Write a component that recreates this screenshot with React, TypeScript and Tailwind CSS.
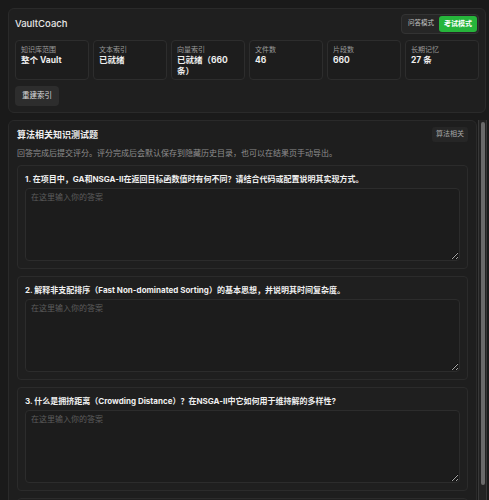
import React from 'react';

const stats = [
  { label: '知识库范围', value: '整个 Vault' },
  { label: '文本索引', value: '已就绪' },
  { label: '向量索引', value: '已就绪（660 条）' },
  { label: '文件数', value: '46' },
  { label: '片段数', value: '660' },
  { label: '长期记忆', value: '27 条' },
];

const questions = [
  '1. 在项目中，GA和NSGA-II在返回目标函数值时有何不同？请结合代码或配置说明其实现方式。',
  '2. 解释非支配排序（Fast Non-dominated Sorting）的基本思想，并说明其时间复杂度。',
  '3. 什么是拥挤距离（Crowding Distance）？在NSGA-II中它如何用于维持解的多样性?',
  '4. 在项目配置中，种群规模和迭代次数是如何设置的？它们对收敛速度有什么影响？',
];

// 单个统计卡片
const StatCard: React.FC<{ label: string; value: string }> = ({ label, value }) => (
  <div className="rounded-[4px] border border-[#2d2d2d] bg-[#1d1d1d] pl-[5px] pr-[8px] pt-[4px] h-[40px]">
    <div className="text-[7px] leading-[9px] text-[#9a9a9a]">{label}</div>
    <div className="mt-[1px] text-[8.5px] leading-[10.5px] font-bold text-[#ededed]">{value}</div>
  </div>
);

// 题目卡片
const QuestionCard: React.FC<{ text: string }> = ({ text }) => (
  <div className="rounded-[4px] border border-[#2b2b2b] bg-[#1f1f1f] p-[7px]">
    <div className="text-[8px] leading-[12px] font-bold text-[#f0f0f0] mb-[3px]">{text}</div>
    <textarea
      placeholder="在这里输入你的答案"
      className="block w-full h-[73px] rounded-[4px] border border-[#2c2c2c] bg-[#1c1c1c] px-[5px] py-[3px] text-[8px] leading-[11px] text-[#ddd] placeholder:text-[#5c5c5c] outline-none [color-scheme:dark]"
    />
  </div>
);

export default function App() {
  return (
    <div
      className="h-screen flex flex-col gap-[7px] bg-[#1a1a1a] pl-2 pr-[3px] pt-2 overflow-hidden"
      style={{ fontFamily: 'Inter, "Noto Sans CJK SC", sans-serif' }}
    >
      {/* 顶部面板 */}
      <div className="rounded-[6px] border border-[#2a2a2a] bg-[#1f1f1f] px-[6px] pt-[6px] pb-[6px] flex flex-col gap-[6px]">
        <div className="flex items-center justify-between h-[18px]">
          <div className="text-[9.5px] font-medium text-[#e6e6e6]">VaultCoach</div>
          <div className="flex rounded-[4px] border border-[#333] bg-[#262626] p-[1px]">
            <button className="px-[5px] h-[16px] text-[6.5px] text-[#c4c4c4] rounded-[3px]">问答模式</button>
            <button className="px-[5px] h-[16px] text-[7px] font-bold text-white bg-[#26b53b] rounded-[3px]">考试模式</button>
          </div>
        </div>
        <div className="mt-[1px] grid grid-cols-6 gap-[4px]">
          {stats.map((s) => (
            <StatCard key={s.label} label={s.label} value={s.value} />
          ))}
        </div>
        <div className="flex">
          <button className="h-[20px] px-[7px] rounded-[4px] bg-[#2d2d2d] text-[7.5px] text-[#dcdcdc]">重建索引</button>
        </div>
      </div>

      {/* 测试题区域 + 滚动条 */}
      <div className="flex-1 min-h-0 flex gap-[1px] -mr-[1px]">
        <div className="flex-1 min-w-0 overflow-hidden">
          <div className="rounded-[6px] border border-[#2a2a2a] bg-[#1e1e1e] px-[8px] pt-[6px] pb-[8px]">
            <div className="flex items-center justify-between h-[15px]">
              <div className="text-[9px] font-bold text-[#eeeeee]">算法相关知识测试题</div>
              <span className="rounded-[3px] bg-[#262626] px-[4px] h-[15px] flex items-center text-[7px] text-[#a8a8a8]">算法相关</span>
            </div>
            <p className="mt-[5px] text-[8px] leading-[12px] text-[#8e8e8e]">
              回答完成后提交评分。评分完成后会默认保存到隐藏历史目录，也可以在结果页手动导出。
            </p>
            <div className="mt-[6px] flex flex-col gap-[7px]">
              {questions.map((q) => (
                <QuestionCard key={q} text={q} />
              ))}
            </div>
          </div>
        </div>
        <div className="w-[9px] border-x border-[#383838] bg-[#232323] pt-[2px] pb-[15px] flex justify-center">
          <div className="w-[4px] h-full rounded-full bg-[#6a6a6a]" />
        </div>
      </div>
    </div>
  );
}
